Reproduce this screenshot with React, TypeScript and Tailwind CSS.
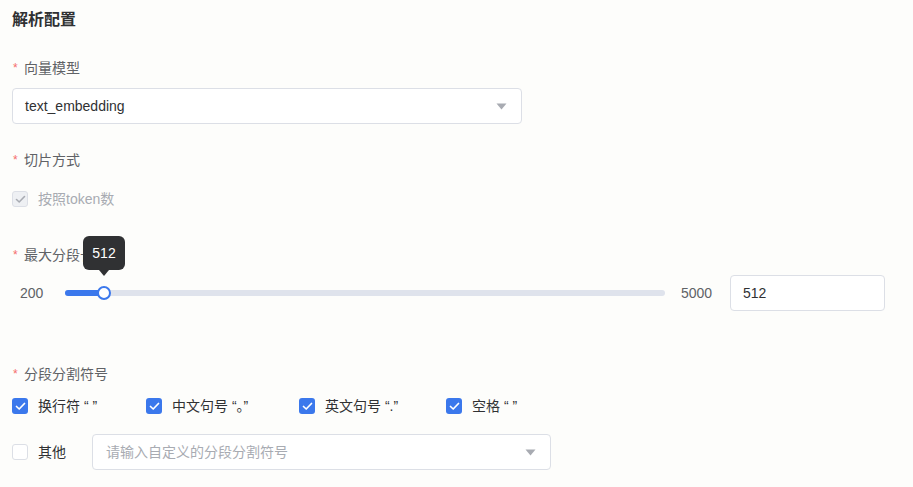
import React from "react";

const font = { fontFamily: '"Liberation Sans", "Noto Sans CJK SC", sans-serif' };

function Label({ children }: { children: React.ReactNode }) {
  return (
    <div className="flex items-center h-5 text-[14px] text-[#606266]">
      <span className="text-[#f56c6c] text-[12px] w-[11px] ml-[1px]">*</span>
      <span>{children}</span>
    </div>
  );
}

function Check({ checked, disabled }: { checked?: boolean; disabled?: boolean }) {
  if (disabled) {
    return (
      <span className="w-4 h-4 rounded-[3px] border border-[#dcdfe6] bg-[#eef0f3] flex items-center justify-center shrink-0">
        <svg width="11" height="9" viewBox="0 0 11 9" fill="none">
          <path d="M1.5 4.5L4.2 7L9.5 1.5" stroke="#a8abb2" strokeWidth="1.6" strokeLinecap="round" strokeLinejoin="round" />
        </svg>
      </span>
    );
  }
  if (checked) {
    return (
      <span className="w-4 h-4 rounded-[3px] bg-[#3b78ec] flex items-center justify-center shrink-0">
        <svg width="11" height="9" viewBox="0 0 11 9" fill="none">
          <path d="M1.5 4.5L4.2 7L9.5 1.5" stroke="#ffffff" strokeWidth="1.7" strokeLinecap="round" strokeLinejoin="round" />
        </svg>
      </span>
    );
  }
  return <span className="w-4 h-4 rounded-[3px] border border-[#dcdfe6] bg-white shrink-0" />;
}

function Caret() {
  return (
    <svg width="11" height="7" viewBox="0 0 11 7">
      <path d="M0.5 0.5H10.5L5.5 6.5Z" fill="#a8abb2" />
    </svg>
  );
}

export default function App() {
  return (
    <div className="w-[913px] h-[487px] bg-[#fdfdfb] overflow-hidden pl-3 pt-2" style={font}>
      <div className="h-6 flex items-center text-[16px] font-bold text-[#303133]">解析配置</div>

      <div className="mt-[26px]">
        <Label>向量模型</Label>
        <div className="mt-[10px] w-[510px] h-9 border border-[#dcdfe6] rounded-[4px] bg-white flex items-center justify-between pl-3 pr-[14px]">
          <span className="text-[14px] text-[#303133]">text_embedding</span>
          <Caret />
        </div>
      </div>

      <div className="mt-[26px]">
        <Label>切片方式</Label>
        <div className="mt-[19px] flex items-center h-5">
          <Check disabled />
          <span className="ml-[10px] text-[14px] text-[#a8abb2]">按照token数</span>
        </div>
      </div>

      <div className="mt-[36px]">
        <Label>最大分段长度</Label>
        <div className="mt-[10px] flex items-center h-9 ml-2">
          <span className="text-[14px] text-[#606266] w-[25px]">200</span>
          <div className="ml-[20px] w-[600px] h-[6px] rounded-full bg-[#dfe3ec] relative">
            <div className="absolute left-0 top-0 h-[6px] w-[39px] rounded-full bg-[#3b78ec]" />
            <div className="absolute left-[32px] top-[-4px] w-[14px] h-[14px] rounded-full bg-white border-2 border-[#3b78ec]" />
            <div className="absolute left-[18px] top-[-54px] flex flex-col items-center">
              <div className="w-[42px] h-[34px] rounded-[6px] bg-[#303133] text-white text-[14px] flex items-center justify-center">512</div>
              <div className="w-0 h-0 border-l-[5px] border-r-[5px] border-t-[6px] border-l-transparent border-r-transparent border-t-[#303133]" />
            </div>
          </div>
          <span className="ml-[16px] text-[14px] text-[#606266] w-[33px]">5000</span>
          <div className="ml-[16px] w-[155px] h-9 border border-[#dcdfe6] rounded-[4px] bg-white flex items-center pl-3 text-[14px] text-[#303133]">512</div>
        </div>
      </div>

      <div className="mt-[53px]">
        <Label>分段分割符号</Label>
        <div className="mt-[12px] flex items-center h-5 text-[14px] text-[#303133]">
          <div className="w-[134px] flex items-center">
            <Check checked />
            <span className="ml-[10px]">换行符 “ ”</span>
          </div>
          <div className="w-[153px] flex items-center">
            <Check checked />
            <span className="ml-[10px]">中文句号 “。”</span>
          </div>
          <div className="w-[147px] flex items-center">
            <Check checked />
            <span className="ml-[10px]">英文句号 “.”</span>
          </div>
          <div className="flex items-center">
            <Check checked />
            <span className="ml-[10px]">空格 “ ”</span>
          </div>
        </div>
        <div className="mt-[18px] flex items-center h-9">
          <Check />
          <span className="ml-[10px] text-[14px] text-[#303133] w-[54px]">其他</span>
          <div className="w-[459px] h-9 border border-[#dcdfe6] rounded-[4px] bg-white flex items-center justify-between pl-[13px] pr-[14px]">
            <span className="text-[14px] text-[#a8abb2]">请输入自定义的分段分割符号</span>
            <Caret />
          </div>
        </div>
      </div>
    </div>
  );
}
